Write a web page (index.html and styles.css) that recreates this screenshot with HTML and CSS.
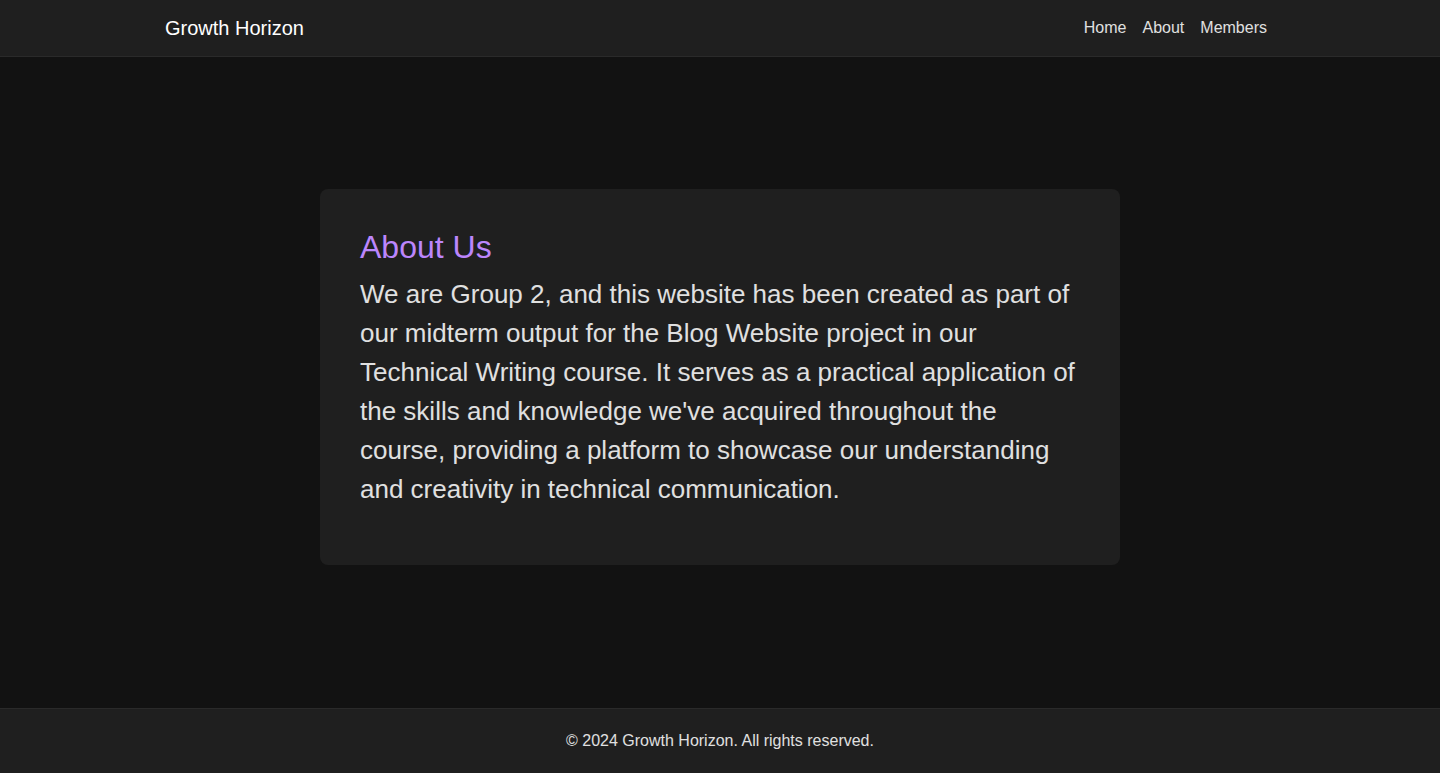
FILE: index.html
```html
<!DOCTYPE html>
<html lang="en">
<head>
<meta charset="utf-8">
<title>About - Growth Horizon</title>
<link rel="stylesheet" href="styles.css">
</head>
<body>
<div class="page">
  <header class="site-header">
    <div class="container header-inner">
      <a class="brand" href="#">Growth Horizon</a>
      <nav class="nav">
        <a href="#">Home</a>
        <a href="#">About</a>
        <a href="#">Members</a>
      </nav>
    </div>
  </header>
  <main class="main">
    <section class="card">
      <h2 class="card-title">About Us</h2>
      <p class="card-text">We are Group 2, and this website has been created as part of our midterm output for the Blog Website project in our Technical Writing course. It serves as a practical application of the skills and knowledge we've acquired throughout the course, providing a platform to showcase our understanding and creativity in technical communication.</p>
    </section>
  </main>
  <footer class="site-footer">
    <p>&copy; 2024 Growth Horizon. All rights reserved.</p>
  </footer>
</div>
</body>
</html>
```

FILE: styles.css
```css
* { box-sizing: border-box; }
html, body { margin: 0; padding: 0; }
body {
  background: #121212;
  color: #e0e0e0;
  font-family: "Liberation Sans", Arial, sans-serif;
}
.page {
  min-height: 100vh;
  display: flex;
  flex-direction: column;
}
.container {
  max-width: 1140px;
  margin: 0 auto;
  padding: 0 15px;
  width: 100%;
}
.site-header {
  background: #1f1f1f;
  border-bottom: 1px solid #2a2a2a;
}
.header-inner {
  height: 56px;
  display: flex;
  align-items: center;
  justify-content: space-between;
}
.brand {
  color: #ffffff;
  text-decoration: none;
  font-size: 20px;
}
.nav {
  display: flex;
}
.nav a {
  color: #e0e0e0;
  text-decoration: none;
  font-size: 16px;
  padding: 0 8px;
}
.main {
  flex: 1;
  display: flex;
  align-items: center;
  justify-content: center;
  padding-bottom: 11px;
}
.card {
  width: 800px;
  background: #1f1f1f;
  border-radius: 8px;
  padding: 40px;
}
.card-title {
  margin: 0 0 9px;
  color: #bb86fc;
  font-size: 32px;
  font-weight: normal;
  line-height: 37px;
}
.card-text {
  margin: 0 0 16px;
  font-size: 26px;
  line-height: 39px;
  color: #e0e0e0;
}
.site-footer {
  background: #1f1f1f;
  border-top: 1px solid #2a2a2a;
  text-align: center;
  padding: 23px 0;
}
.site-footer p {
  margin: 0;
  font-size: 16px;
  line-height: 18px;
  color: #e0e0e0;
}
```
